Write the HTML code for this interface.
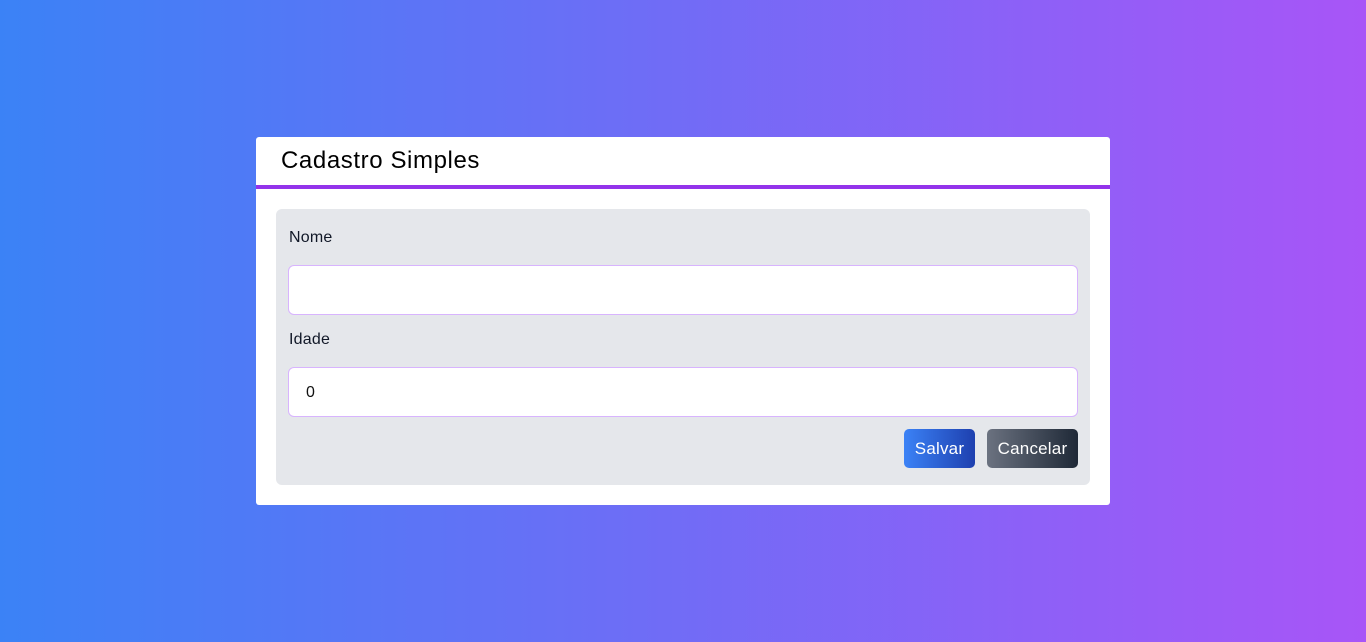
<!DOCTYPE html>
<html><head><meta charset="utf-8"><style>
*{box-sizing:border-box;margin:0;padding:0}
html,body{width:1366px;height:642px;overflow:hidden}
body{background:linear-gradient(90deg,#3b82f6,#a855f7);font-family:"Liberation Sans",sans-serif;position:relative}
.card{position:absolute;left:256px;top:137px;width:854px;height:368px;background:#fff;border-radius:3px}
.hdr{height:52px;border-bottom:4px solid #9333ea;padding-left:25px}
.hdr h1{font-weight:normal;font-size:24px;letter-spacing:0.6px;line-height:48px;color:#000}
.box{position:absolute;left:20px;top:72px;width:814px;height:276px;background:#e5e7eb;border-radius:6px}
.lbl{position:absolute;left:13px;font-size:16px;letter-spacing:0.2px;color:#111827}
.inp{position:absolute;left:12px;width:790px;height:50px;background:#fff;border:1px solid #d8b4fe;border-radius:6px;font-size:16px;padding-left:17px;line-height:50px;color:#111}
.btn{position:absolute;top:220px;height:39px;border-radius:5px;color:#fff;font-size:17px;letter-spacing:0.2px;line-height:40px;text-align:center}
</style></head><body>
<div class="card">
<div class="hdr"><h1>Cadastro Simples</h1></div>
<div class="box">
<div class="lbl" style="top:20px">Nome</div>
<div class="inp" style="top:56px"></div>
<div class="lbl" style="top:122px">Idade</div>
<div class="inp" style="top:158px">0</div>
<div class="btn" style="left:628px;width:71px;background:linear-gradient(90deg,#3b82f6,#1e40af)">Salvar</div>
<div class="btn" style="left:711px;width:91px;background:linear-gradient(90deg,#6b7280,#1f2937)">Cancelar</div>
</div>
</div>
</body></html>
